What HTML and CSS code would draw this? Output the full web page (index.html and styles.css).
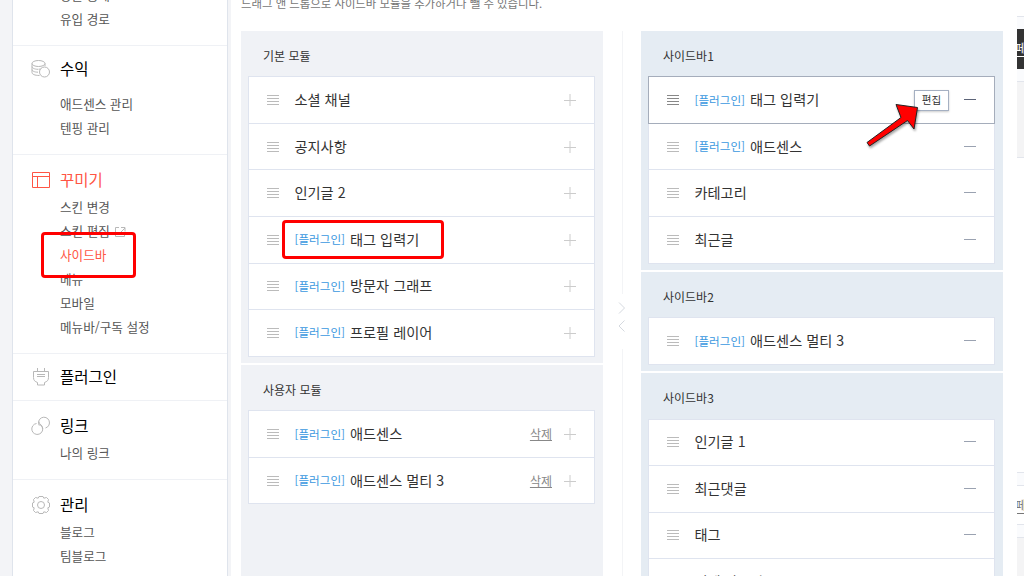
FILE: index.html
```html
<!DOCTYPE html>
<html lang="ko">
<head>
    <meta charset="UTF-8">
    <meta name="viewport" content="width=device-width, initial-scale=1.0">
    <title>사이드바</title>
    <link rel="stylesheet" href="styles.css">
</head>
<body>
    <!-- Shared icons -->
    <svg class="sprite">
        <symbol id="drag" viewBox="0 0 12 11"><path d="M0 1.5h12M0 4.5h12M0 7.5h12M0 10.5h12"/></symbol>
        <symbol id="plus" viewBox="0 0 12 12"><path d="M0 6.5h12M6 0v12"/></symbol>
        <symbol id="minus" viewBox="0 0 12 12"><path d="M0 5.5h12"/></symbol>
    </svg>

    <div class="page">
        <!-- Left menu -->
        <nav class="menu">
            <section class="first">
                <ul>
                    <li>방문 통계</li>
                    <li>유입 경로</li>
                </ul>
            </section>
            <section class="profit">
                <h2>
                    <svg class="icon" viewBox="0 0 20 20"><ellipse cx="7.5" cy="4.5" rx="6.500" ry="3"/><path d="M1 4.500v3c0 1.500 2.500 2.800 6 2.800M1 7.500v3c0 1.500 2.500 2.700 6 2.700M1 10.500v3c0 1.600 2.500 3 7.500 3M14 4.500v2.500M7.500 10.200c2.500 0 4-.4 5.500-1.500"/><circle class="coin" cx="13.5" cy="13" r="5"/></svg>
                    <span>수익</span>
                </h2>
                <ul>
                    <li>애드센스 관리</li>
                    <li>텐핑 관리</li>
                </ul>
            </section>
            <section>
                <h2 class="active">
                    <svg class="icon" viewBox="0 0 20 20"><path d="M1.500 2.500h17v15h-17zM1.500 6.500h17M6.500 6.500v11"/></svg>
                    <span>꾸미기</span>
                </h2>
                <ul>
                    <li>스킨 변경</li>
                    <li>스킨 편집<svg class="external" viewBox="0 0 12 12"><path d="M5 1.500H1.500v9h9V7M7 1.500h4v4M11 2L5 8"/></svg></li>
                    <li class="active marked">사이드바</li>
                    <li>메뉴</li>
                    <li>모바일</li>
                    <li>메뉴바/구독 설정</li>
                </ul>
            </section>
            <section class="single">
                <h2>
                    <svg class="icon" viewBox="0 0 20 20"><path d="M6.500 1v3.500M13.500 1v3.500M2.500 4.500h15v6c0 3-1.500 4-4 5v2.500h-7v-2.500c-2.500-1-4-2-4-5zM6 7.500h8M6 9.500h8"/></svg>
                    <span>플러그인</span>
                </h2>
            </section>
            <section>
                <h2>
                    <svg class="icon" viewBox="0 0 20 20"><path d="M8.300 9.600A5.500 5.500 0 1 1 14.500 12M11.200 10.500A5.500 5.500 0 1 1 5.500 7.500M8 5.500c0 2.500 1.500 4 2.700 5M11.500 13c0-2.500-1-4-2.500-5"/></svg>
                    <span>링크</span>
                </h2>
                <ul>
                    <li>나의 링크</li>
                </ul>
            </section>
            <section>
                <h2>
                    <svg class="icon" viewBox="0 0 20 20"><circle cx="10" cy="10" r="3.500"/><path d="M8 1.500h4l.8 1.700 2.700-.7 2 2-.7 2.700 1.700.8v4l-1.700.8.7 2.700-2 2-2.700-.7-.8 1.700H8l-.8-1.700-2.700.7-2-2 .7-2.700-1.700-.8V8l1.700-.8-.7-2.700 2-2 2.700.7z"/></svg>
                    <span>관리</span>
                </h2>
                <ul>
                    <li>블로그</li>
                    <li>팀블로그</li>
                </ul>
            </section>
        </nav>

        <!-- Module editor -->
        <main>
            <p class="guide">드래그 앤 드롭으로 사이드바 모듈을 추가하거나 뺄 수 있습니다.</p>
            <div class="columns">
                <div class="column">
                    <section class="group">
                        <h3>기본 모듈</h3>
                        <ul class="modules">
                            <li><svg class="drag"><use href="#drag"/></svg><span class="name">소셜 채널</span><svg class="plus"><use href="#plus"/></svg></li>
                            <li><svg class="drag"><use href="#drag"/></svg><span class="name">공지사항</span><svg class="plus"><use href="#plus"/></svg></li>
                            <li><svg class="drag"><use href="#drag"/></svg><span class="name">인기글 2</span><svg class="plus"><use href="#plus"/></svg></li>
                            <li class="marked"><svg class="drag"><use href="#drag"/></svg><em>[플러그인]</em><span class="name">태그 입력기</span><svg class="plus"><use href="#plus"/></svg></li>
                            <li><svg class="drag"><use href="#drag"/></svg><em>[플러그인]</em><span class="name">방문자 그래프</span><svg class="plus"><use href="#plus"/></svg></li>
                            <li><svg class="drag"><use href="#drag"/></svg><em>[플러그인]</em><span class="name">프로필 레이어</span><svg class="plus"><use href="#plus"/></svg></li>
                        </ul>
                    </section>
                    <section class="group">
                        <h3>사용자 모듈</h3>
                        <ul class="modules">
                            <li><svg class="drag"><use href="#drag"/></svg><em>[플러그인]</em><span class="name">애드센스</span><a class="delete">삭제</a><svg class="plus"><use href="#plus"/></svg></li>
                            <li><svg class="drag"><use href="#drag"/></svg><em>[플러그인]</em><span class="name">애드센스 멀티 3</span><a class="delete">삭제</a><svg class="plus"><use href="#plus"/></svg></li>
                        </ul>
                    </section>
                </div>

                <div class="divider">
                    <span class="line top"></span>
                    <svg viewBox="0 0 8 30"><path d="M1 .5l5.500 5.500L1 11.500M6.500 18.500L1 24l5.500 5.500"/></svg>
                    <span class="line"></span>
                </div>

                <div class="column sidebar">
                    <section class="group">
                        <h3>사이드바1</h3>
                        <ul class="modules">
                            <li class="selected">
                                <svg class="drag"><use href="#drag"/></svg><em>[플러그인]</em><span class="name">태그 입력기</span><button class="edit">편집</button><svg class="minus"><use href="#minus"/></svg>
                                <svg class="arrow" viewBox="0 0 56 54"><path d="M3 43.500L37 18.500 32 5.500 53.500 8.500 50 30 43.500 21.500 5.500 47z"/></svg>
                            </li>
                            <li><svg class="drag"><use href="#drag"/></svg><em>[플러그인]</em><span class="name">애드센스</span><svg class="minus"><use href="#minus"/></svg></li>
                            <li><svg class="drag"><use href="#drag"/></svg><span class="name">카테고리</span><svg class="minus"><use href="#minus"/></svg></li>
                            <li><svg class="drag"><use href="#drag"/></svg><span class="name">최근글</span><svg class="minus"><use href="#minus"/></svg></li>
                        </ul>
                    </section>
                    <section class="group">
                        <h3>사이드바2</h3>
                        <ul class="modules">
                            <li><svg class="drag"><use href="#drag"/></svg><em>[플러그인]</em><span class="name">애드센스 멀티 3</span><svg class="minus"><use href="#minus"/></svg></li>
                        </ul>
                    </section>
                    <section class="group">
                        <h3>사이드바3</h3>
                        <ul class="modules">
                            <li><svg class="drag"><use href="#drag"/></svg><span class="name">인기글 1</span><svg class="minus"><use href="#minus"/></svg></li>
                            <li><svg class="drag"><use href="#drag"/></svg><span class="name">최근댓글</span><svg class="minus"><use href="#minus"/></svg></li>
                            <li><svg class="drag"><use href="#drag"/></svg><span class="name">태그</span><svg class="minus"><use href="#minus"/></svg></li>
                            <li><svg class="drag"><use href="#drag"/></svg><span class="name">전체 방문자</span><svg class="minus"><use href="#minus"/></svg></li>
                        </ul>
                    </section>
                </div>
            </div>
        </main>

        <!-- Preview, cut off by the window -->
        <aside class="preview">
            <div class="bar"></div>
            <div class="tab dark">페</div>
            <div class="bar low"></div>
            <div class="block"></div>
            <div class="space"></div>
            <div class="bar"></div>
            <div class="tab">페</div>
            <div class="bar"></div>
            <div class="block rest"></div>
        </aside>
    </div>
</body>
</html>
```
FILE: styles.css
```css
*,
*::after {
    box-sizing: border-box;
}

body {
    margin: 0;
    height: 576px;
    overflow: hidden;
    background: #f3f4f7;
    font-family: "Noto Sans CJK KR", "Noto Sans", sans-serif;
    color: #333;
}

h2, h3, p, ul {
    margin: 0;
    padding: 0;
    font-weight: normal;
    list-style: none;
}

svg {
    fill: none;
    stroke: currentColor;
    flex: none;
}

.sprite {
    display: none;
}

.page {
    display: flex;
    height: 576px;
    padding-left: 12px;
    overflow: hidden;
}

/* Left menu */
.menu {
    flex: none;
    width: 216px;
    margin-right: 3px;
    background: #fff;
    border: solid #dfe4ec;
    border-width: 0 1px;
}

.menu section {
    padding: 13px 0 14px;
    border-bottom: 1px solid #eff1f5;
}

.menu .first {
    margin-top: -17px;
    padding-top: 0;
}

.menu .profit {
    padding-top: 11px;
}

.menu .single {
    padding: 11px 0 8px;
}

.menu h2 {
    display: flex;
    align-items: center;
    height: 24px;
    margin-bottom: 3px;
    padding-left: 18px;
    font-size: 15.5px;
    color: #000;
}

.menu h2 span {
    padding-bottom: 2px;
}

.menu .profit h2 {
    margin-bottom: 11px;
}

.menu .icon {
    width: 20px;
    height: 20px;
    margin-right: 9px;
    color: #b8b8b8;
}

.coin {
    fill: #fff;
}

.menu li {
    position: relative;
    height: 24px;
    padding-left: 47px;
    font-size: 12.6px;
    line-height: 23px;
    color: #555;
}

.menu .active,
.menu .active .icon {
    color: #ff5544;
}

.external {
    width: 12px;
    height: 12px;
    margin-left: 4px;
    color: #b8b8b8;
    vertical-align: -2px;
}

/* Red marks */
.marked::after {
    content: "";
    position: absolute;
    z-index: 2;
    border: 3px solid #f00;
    border-radius: 4px;
}

.menu .marked::after {
    left: 28px;
    top: -11px;
    width: 95px;
    height: 46px;
}

.modules .marked::after {
    left: 33px;
    top: 3px;
    width: 162px;
    height: 39px;
}

/* Module editor */
main {
    flex: none;
    display: flex;
    flex-direction: column;
    width: 786px;
    padding-left: 10px;
    background: #fff;
}

.guide {
    height: 31px;
    margin-top: -9px;
    margin-bottom: 9px;
    font-size: 11.4px;
    line-height: 24px;
    color: #777;
}

.columns {
    flex: 1;
    display: flex;
    min-height: 0;
}

.column {
    display: flex;
    flex-direction: column;
    gap: 2px;
    width: 362px;
}

.group {
    flex: none;
    padding: 0 8px 6.3px 7px;
    background: #f0f2f6;
}

.group:last-child {
    flex: 1 0 auto;
}

.sidebar .group {
    background: #e5ecf3;
}

.group h3 {
    height: 45.4px;
    padding-left: 15px;
    font-size: 12px;
    line-height: 49.5px;
}

.modules {
    border: 1px solid #dfe4ef;
    border-top: 0;
    background: #fff;
}

.modules li {
    position: relative;
    display: flex;
    align-items: center;
    height: 46.55px;
    padding: 0 18px;
    border-top: 1px solid #dfe4ef;
    font-size: 14.2px;
}

.drag {
    width: 12px;
    height: 11px;
    margin: 0 15.500px 1px 0;
    color: #bbb;
}

em {
    margin-right: 5px;
    padding-bottom: 1px;
    font-size: 11.6px;
    font-style: normal;
    color: #3a98e0;
}

.name {
    flex: 1;
    padding-bottom: 2px;
}

.plus,
.minus {
    width: 12px;
    height: 12px;
    color: #ccc;
}

.minus {
    color: #9aa2b1;
}

.delete {
    margin-right: 12px;
    padding-bottom: 1px;
    font-size: 12px;
    color: #888;
    text-decoration: underline;
}

.modules .selected {
    margin: 0 -1px;
    box-shadow: 0 1px #a5adbb;
    border: 1px solid #a5adbb;
    border-bottom: 0;
    z-index: 1;
}

.selected .drag {
    color: #888;
}

.selected .minus {
    color: #5c6478;
}

.edit {
    width: 35px;
    height: 21px;
    margin-right: 15px;
    padding: 0;
    border: 1px solid #a5b0c2;
    background: #fff;
    box-shadow: 0 1px 2px #ccc;
    font-family: inherit;
    font-size: 10.5px;
    line-height: 18px;
    color: #333;
}

.arrow {
    position: absolute;
    left: 215px;
    top: 22px;
    width: 56px;
    height: 54px;
    fill: #f00;
    stroke: #222;
    filter: drop-shadow(1px 2px 1px rgba(0, 0, 0, 0.35));
}

.divider {
    display: flex;
    flex-direction: column;
    align-items: center;
    width: 38px;
}

.divider svg {
    width: 8px;
    height: 30px;
    margin: 8px 0 17px;
    color: #d5d9df;
}

.line {
    flex: 1;
    width: 1px;
    background: #f3f4f6;
}

.line.top {
    flex: none;
    height: 263px;
}

/* Preview */
.preview {
    flex: 1;
    height: 576px;
    padding-top: 16px;
    overflow: hidden;
    background: #fff;
}

.preview,
.menu {
    min-width: 0;
}

.bar {
    height: 14px;
    border: solid #e2e5ec;
    border-width: 1px 0;
    background: #fafbfd;
}

.preview .bar:first-child {
    height: 13px;
    border-bottom: 0;
}

.bar.low {
    height: 13px;
    border-top: 0;
}

.tab {
    height: 38px;
    overflow: hidden;
    font-size: 12px;
    line-height: 38px;
    color: #777;
    text-decoration: underline;
    text-underline-offset: 3px;
    text-indent: -2px;
}

.tab.dark {
    height: 40px;
    background: #333;
    color: #fff;
}

.block {
    height: 76px;
    border-bottom: 1px solid #e2e5ec;
    background: #f4f4f5;
}

.space {
    height: 314px;
}
```
